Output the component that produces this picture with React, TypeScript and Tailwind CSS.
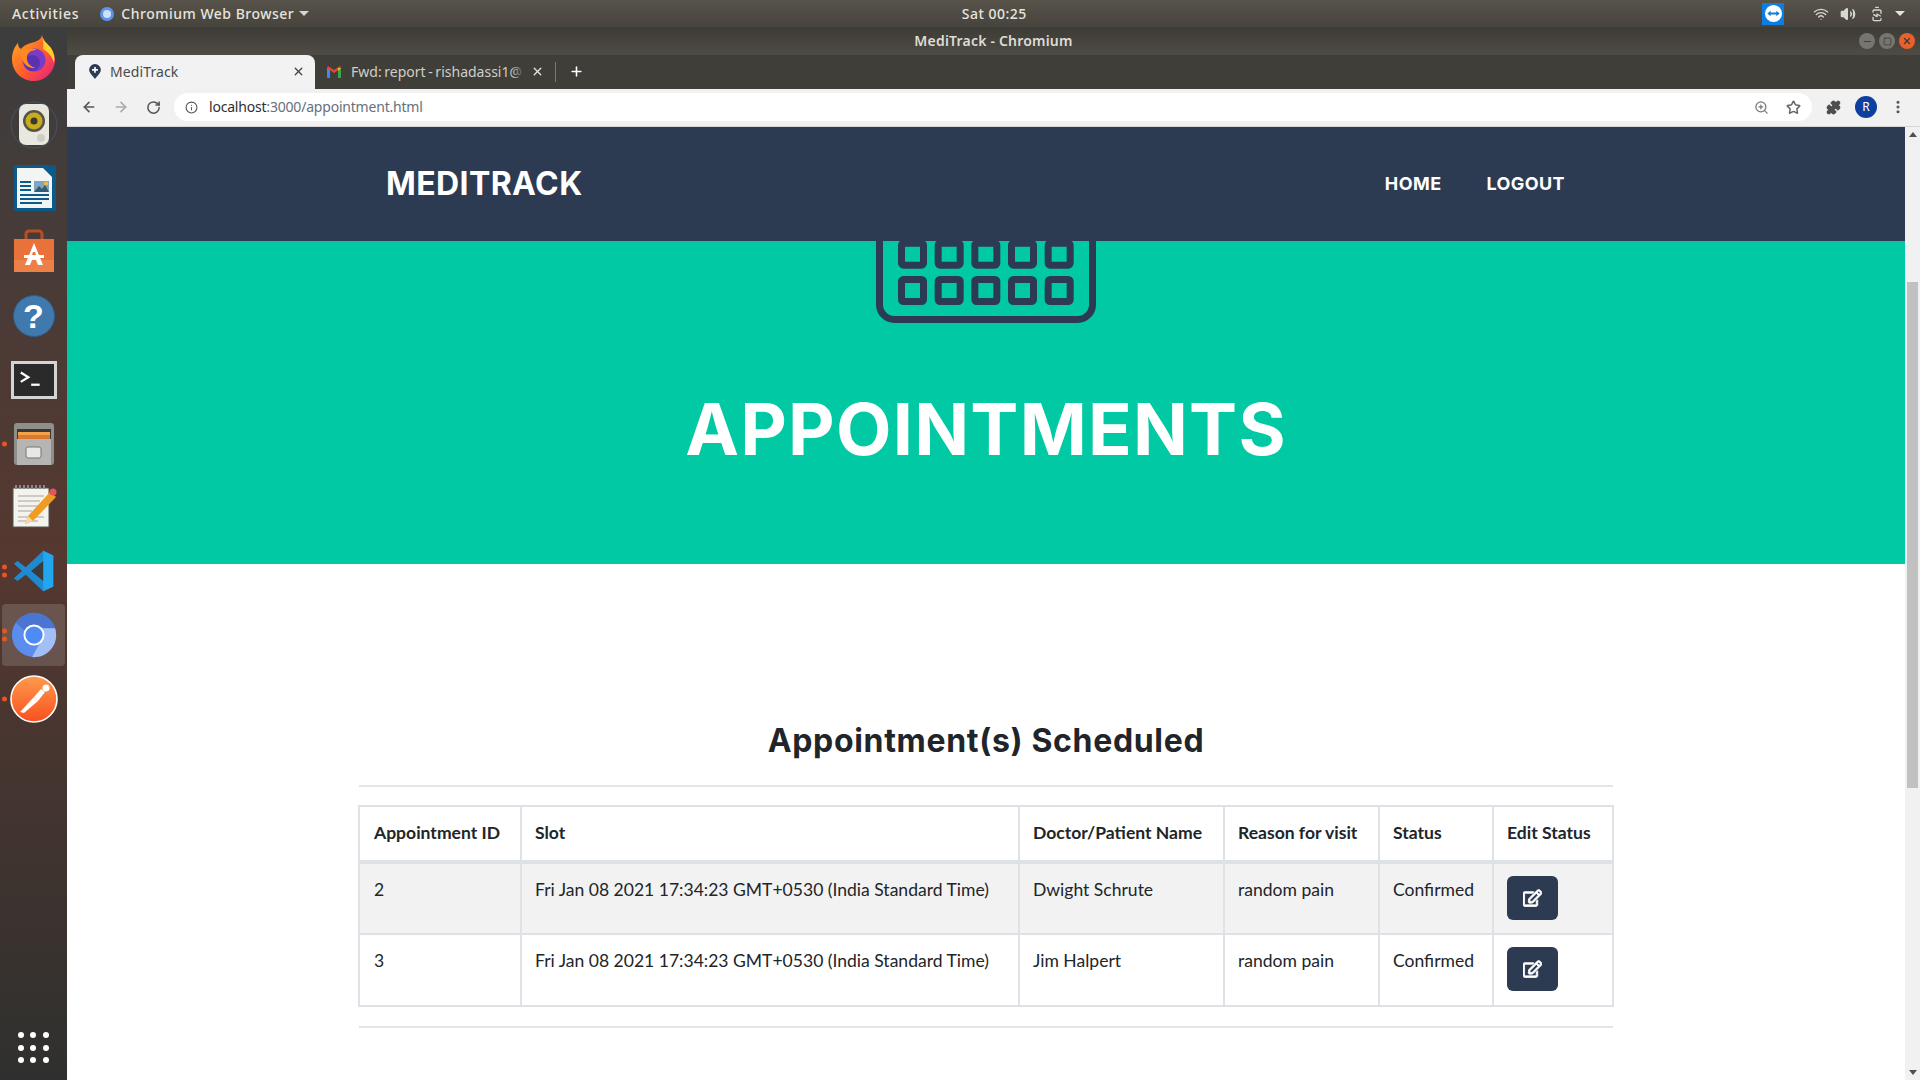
import { ArrowLeft, ArrowRight, RotateCw, Info, ZoomIn, Star, Puzzle, MoreVertical, X, Plus, Minus, Square, Volume2, Wifi, BatteryCharging } from 'lucide-react'
import { FaRegEdit } from 'react-icons/fa'

const rows = [
  { id: '2', name: 'Dwight Schrute', shaded: true },
  { id: '3', name: 'Jim Halpert', shaded: false },
]

function Firefox() {
  return (
    <svg viewBox="0 0 48 48" className="h-[48px] w-[48px] -translate-y-[3px]">
      <defs>
        <linearGradient id="ff" x1="0" y1="0" x2="1" y2="1">
          <stop offset="0" stopColor="#ffb01f" />
          <stop offset="0.55" stopColor="#ff5b2e" />
          <stop offset="1" stopColor="#e3168c" />
        </linearGradient>
      </defs>
      <path d="M32 1c1 6 5 8 9 13 4 6 5 12 3 18-3 9-11 15-20 15C11 47 2 37 2 25 2 18 5 12 8 9c0 3 1 5 3 6 2-3 6-5 10-6 5-1 10-3 11-8z" fill="url(#ff)" />
      <path d="M32 1c1 6 5 8 9 13 3 5 4 10 3 15-2-7-6-11-11-14 1-5 0-10-1-14z" fill="#ffd02a" />
      <circle cx="24" cy="26" r="11.5" fill="#7a3bc8" />
      <circle cx="22" cy="29" r="8" fill="#5a32b0" />
      <path d="M10 18c4-3 11-5 17-2-5 0-9 2-10 6-1 6 3 11 9 12-7 1-14-3-16-16z" fill="#ff8a1f" />
    </svg>
  )
}

function Rhythmbox() {
  return (
    <svg viewBox="0 0 48 48" className="h-[48px] w-[48px]">
      <circle cx="24" cy="24" r="23" fill="none" stroke="#4a6b84" strokeWidth="1" opacity="0.5" />
      <rect x="9" y="3" width="30" height="41" rx="7" fill="#e9e8df" />
      <circle cx="24" cy="20" r="11" fill="#55534b" />
      <circle cx="24" cy="20" r="8.500" fill="#c8ac1c" />
      <circle cx="24" cy="20" r="3.500" fill="#3c3a30" />
      <circle cx="31" cy="37" r="4" fill="#cfcec6" />
    </svg>
  )
}

function Writer() {
  return (
    <svg viewBox="0 0 48 48" className="h-[48px] w-[48px]">
      <path d="M6 1h29l11 11v33a2 2 0 0 1-2 2H6a2 2 0 0 1-2-2V3a2 2 0 0 1 2-2z" fill="#0c5a8a" />
      <path d="M7 4h26l9 9v31H7z" fill="#f3f4f4" />
      <path d="M33 1h11a2 2 0 0 1 2 2v9z" fill="#0c5a8a" />
      <rect x="24" y="17" width="15" height="11" fill="#7ea5c2" />
      <path d="M24 28l5-6 3 3 3-4 4 7z" fill="#355a74" />
      <rect x="34" y="18" width="4" height="3" fill="#e9b949" />
      <path d="M10 18h11M10 22h11M10 26h11M10 31h29M10 35h29M10 39h22" stroke="#0c5a8a" strokeWidth="2" />
    </svg>
  )
}

function Software() {
  return (
    <svg viewBox="0 0 48 48" className="h-[48px] w-[48px]">
      <path d="M16 11V6a3 3 0 0 1 3-3h10a3 3 0 0 1 3 3v5" fill="none" stroke="#b84f22" strokeWidth="3" />
      <path d="M4 11h40v33H4z" fill="#e9713a" />
      <path d="M4 32h40v12H4z" fill="#ed7f49" />
      <path d="M24 15l-9 22h5l2-5h4l2 5h5zM23 24h2l1 3h-4z" fill="#fff" />
      <rect x="14" y="27" width="20" height="3" fill="#fff" />
    </svg>
  )
}

function Help() {
  return (
    <div className="grid h-[42px] w-[42px] place-items-center rounded-full border border-[#2f5d8a] bg-[#3f79ad] font-['Liberation_Sans',sans-serif] text-[34px] font-bold leading-none text-white">?</div>
  )
}

function Terminal() {
  return (
    <div className="h-[38px] w-[46px] border-[3px] border-[#d4d4d2] bg-[#2a2a2a] p-[3px]">
      <svg viewBox="0 0 36 26" className="h-full w-full">
        <path d="M4 5l8 5-8 5" fill="none" stroke="#fff" strokeWidth="2.400" />
        <path d="M15 18h9" stroke="#fff" strokeWidth="2.400" />
      </svg>
    </div>
  )
}

function Files() {
  return (
    <svg viewBox="0 0 48 48" className="h-[48px] w-[48px]">
      <rect x="4" y="3" width="40" height="42" rx="3" fill="#8e8e8c" />
      <rect x="7" y="9" width="34" height="12" fill="#3a3834" />
      <rect x="8" y="12" width="32" height="3" fill="#f1a14a" />
      <rect x="8" y="15" width="32" height="5" fill="#d9782e" />
      <rect x="7" y="19" width="34" height="26" fill="#b5b5b3" />
      <rect x="16" y="27" width="15" height="11" rx="2" fill="#e8e8e6" stroke="#777" />
    </svg>
  )
}

function Gedit() {
  return (
    <svg viewBox="0 0 48 48" className="h-[48px] w-[48px]">
      <rect x="3" y="5" width="36" height="39" fill="#f4f3ee" stroke="#55534b" />
      <path d="M5 4h32" stroke="#888" strokeWidth="4" strokeDasharray="2 2" />
      <path d="M8 13h26M8 18h22M8 23h26M8 28h14M8 34h26M8 38h20" stroke="#a5a39c" strokeWidth="1.200" />
      <path d="M40 9l6 5-23 24-8 3 3-8z" fill="#ee9c26" />
      <path d="M18 33l5 5-8 3z" fill="#f1d8a8" />
      <circle cx="43" cy="9" r="3.500" fill="#e0565b" />
    </svg>
  )
}

function VSCode() {
  return (
    <svg viewBox="0 0 48 48" className="h-[44px] w-[44px]">
      <path d="M34 2l11 5v34l-11 5-19-18-9 7-4-3 9-8-9-8 4-3 9 7z" fill="#1f8ad0" />
      <path d="M34 2l11 5v34l-11 5z" fill="#22a6f0" />
      <path d="M34 13L21 24l13 11z" fill="#3c3b3a" />
    </svg>
  )
}

function Chromium() {
  return (
    <svg viewBox="0 0 48 48" className="h-[46px] w-[46px]">
      <circle cx="24" cy="24" r="23" fill="#5b8def" />
      <path d="M5 11A23 23 0 0 1 46 17H24a8 8 0 0 0-8 4z" fill="#4a76d1" />
      <path d="M46 17a23 23 0 0 1-24 30l10-18a9 9 0 0 0 0-12z" fill="#a3c0f6" />
      <circle cx="24" cy="24" r="11" fill="#fff" />
      <circle cx="24" cy="24" r="9" fill="#4e8bf5" />
    </svg>
  )
}

function Postman() {
  return (
    <svg viewBox="0 0 48 48" className="h-[48px] w-[48px]">
      <defs>
        <linearGradient id="pm" x1="0" y1="0" x2="0" y2="1">
          <stop offset="0" stopColor="#ff9a4d" />
          <stop offset="1" stopColor="#f9501f" />
        </linearGradient>
      </defs>
      <circle cx="24" cy="24" r="23" fill="url(#pm)" stroke="#fff" strokeWidth="1.600" />
      <path d="M10 37l14-15 4 4-14 12z" fill="#fff" />
      <path d="M24 22l7-8 4 3-7 9z" fill="#fff" />
      <circle cx="36" cy="13" r="3.500" fill="#fff" />
    </svg>
  )
}

function Gmail() {
  return (
    <svg viewBox="0 0 14 12" className="h-[12px] w-[14px]">
      <path d="M0 2h3v10H1a1 1 0 0 1-1-1z" fill="#4285f4" />
      <path d="M11 2h3v9a1 1 0 0 1-1 1h-2z" fill="#34a853" />
      <path d="M0 2l7 5 7-5-1-2-6 4-6-4z" fill="#ea4335" />
      <path d="M11 2l3 0-3 3z" fill="#fbbc04" />
    </svg>
  )
}

function MapPin() {
  return (
    <svg viewBox="0 0 14 18" className="h-[15px] w-[12px]">
      <path d="M7 0a7 7 0 0 1 7 7c0 4-4 7-7 11C4 14 0 11 0 7a7 7 0 0 1 7-7z" fill="#2c3a52" />
      <path d="M6 3.500h2V6h2.500v2H8v2.500H6V8H3.500V6H6z" fill="#fff" />
    </svg>
  )
}

function TeamViewer() {
  return (
    <div className="grid h-[22px] w-[22px] place-items-center bg-[#0e7de0]">
      <svg viewBox="0 0 20 20" className="h-[19px] w-[19px]">
        <circle cx="10" cy="10" r="9" fill="#fff" />
        <path d="M3.500 10l3.500-3v2h6V7l3.500 3-3.500 3v-2H7v2z" fill="#0e7de0" />
      </svg>
    </div>
  )
}

function CalendarBottom() {
  const cols = [22, 58.67, 95.33, 132, 168.67]
  return (
    <svg viewBox="0 0 220 82" className="h-[82px] w-[220px] shrink-0">
      <path d="M3.500 -20V63a15 15 0 0 0 15 15.500H201.500a15 15 0 0 0 15-15.500V-20" fill="none" stroke="#2c3a52" strokeWidth="7" />
      {cols.map((x) => (
        <g key={x}>
          <rect x={x + 3.5} y={2.2} width={22} height={22} rx={2} fill="none" stroke="#2c3a52" strokeWidth="7" />
          <rect x={x + 3.5} y={38.5} width={22} height={22} rx={2} fill="none" stroke="#2c3a52" strokeWidth="7" />
        </g>
      ))}
    </svg>
  )
}

const dock = [
  { icon: <Firefox />, dots: 0 },
  { icon: <Rhythmbox />, dots: 0 },
  { icon: <Writer />, dots: 0 },
  { icon: <Software />, dots: 0 },
  { icon: <Help />, dots: 0 },
  { icon: <Terminal />, dots: 0 },
  { icon: <Files />, dots: 1 },
  { icon: <Gedit />, dots: 0 },
  { icon: <VSCode />, dots: 2 },
  { icon: <Chromium />, dots: 2, active: true },
  { icon: <Postman />, dots: 1 },
]

function Dock() {
  return (
    <aside className="flex h-full w-[67px] shrink-0 flex-col bg-gradient-to-b from-[#3c3d3d] via-[#553830] to-[#2f302e] pt-[2px]">
      {dock.map((item, i) => (
        <div key={i} className="relative flex h-[63.800px] items-center justify-center">
          {item.active && <span className="absolute inset-x-[2px] inset-y-[1px] rounded bg-white/15" />}
          <span className="relative flex items-center justify-center">{item.icon}</span>
          {item.dots > 0 && (
            <span className="absolute left-[2px] top-1/2 flex -translate-y-1/2 flex-col gap-[3px]">
              {Array.from({ length: item.dots }).map((_, d) => (
                <span key={d} className="h-[5px] w-[5px] rounded-full bg-[#e95420]" />
              ))}
            </span>
          )}
        </div>
      ))}
      <div className="mt-auto mb-[16px] grid h-[32px] w-[32px] grid-cols-3 gap-[6px] self-center">
        {Array.from({ length: 9 }).map((_, i) => (
          <span key={i} className="h-[6px] w-[6px] rounded-full bg-white" />
        ))}
      </div>
    </aside>
  )
}

function TopBar() {
  return (
    <div className="flex h-[27px] shrink-0 items-center bg-gradient-to-b from-[#57534b] to-[#47443d] pl-[12px] pr-[15px] font-['Noto_Sans',sans-serif] text-[14px] font-medium tracking-[0.5px] text-[#e6e4df]">
      <span className="tracking-[0.7px]">Activities</span>
      <span className="ml-[21px] h-[14px] w-[14px] rounded-full border-[3px] border-[#5f93ea] bg-[#cfe0fb]" />
      <span className="ml-[7px]">Chromium Web Browser</span>
      <span className="ml-[5px] border-x-[5px] border-t-[5px] border-x-transparent border-t-[#d8d6d0]" />
      <span className="ml-[650px] w-[70px] text-center">Sat 00:25</span>
      <span className="ml-auto"><TeamViewer /></span>
      <Wifi className="ml-[29px] h-[16px] w-[16px] text-[#d8d6d0]" />
      <Volume2 className="ml-[11px] h-[16px] w-[16px] fill-[#d8d6d0] text-[#d8d6d0]" />
      <BatteryCharging className="ml-[13px] h-[16px] w-[16px] -rotate-90 text-[#d8d6d0]" />
      <span className="ml-[10px] border-x-[5px] border-t-[5px] border-x-transparent border-t-[#e6e4df]" />
    </div>
  )
}

function TitleBar() {
  return (
    <div className="relative flex h-[28px] shrink-0 items-center justify-center bg-gradient-to-b from-[#3d3b35] to-[#4f4c45] pb-[2px] font-['Noto_Sans',sans-serif] text-[14px] font-semibold tracking-[0.2px] text-[#dedcd7]">
      <span>MediTrack - Chromium</span>
      <div className="absolute right-[5px] top-[6px] flex gap-[4px]">
        <span className="grid h-[16px] w-[16px] place-items-center rounded-full bg-[#77756f]"><Minus className="h-[11px] w-[11px] text-[#3c3b37]" /></span>
        <span className="grid h-[16px] w-[16px] place-items-center rounded-full bg-[#77756f]"><Square className="h-[9px] w-[9px] text-[#3c3b37]" /></span>
        <span className="grid h-[16px] w-[16px] place-items-center rounded-full bg-[#e9602b]"><X className="h-[10px] w-[10px] text-[#3c3b37]" strokeWidth={3} /></span>
      </div>
    </div>
  )
}

function TabStrip() {
  return (
    <div className="flex h-[34px] shrink-0 items-end bg-[#3f3e38] pl-[8px] font-['Noto_Sans',sans-serif] text-[14px]">
      <div className="flex h-[34px] w-[240px] items-center rounded-t-[8px] bg-[#f2f2f2] pb-[1px] pl-[14px] pr-[10px] text-[#4a4a4a]">
        <MapPin />
        <span className="ml-[9px] pb-[1px] tracking-[0.1px]">MediTrack</span>
        <X className="ml-auto h-[13px] w-[13px] text-[#444]" strokeWidth={2.5} />
      </div>
      <div className="flex h-[34px] w-[280px] items-center pb-[1px] pl-[12px] text-[#cfcfca]">
        <Gmail />
        <span className="relative ml-[10px] w-[174px] overflow-hidden whitespace-nowrap pb-[1px] [word-spacing:-1px]">
          Fwd: report - rishadassi1@
          <span className="absolute inset-y-0 right-0 w-[14px] bg-gradient-to-r from-transparent to-[#3f3e38]" />
        </span>
        <X className="ml-[6px] h-[13px] w-[13px] text-[#e4e4e0]" strokeWidth={2.5} />
        <span className="ml-[11px] h-[20px] w-px bg-[#7a7972]" />
        <Plus className="ml-[13px] h-[15px] w-[15px] text-white" strokeWidth={2.5} />
      </div>
    </div>
  )
}

function Toolbar() {
  return (
    <div className="flex h-[38px] shrink-0 items-center border-b border-[#d5d5d5] bg-[#f1f1f1] pb-[1px] pl-[14px] pr-[14px] text-[#555]">
      <ArrowLeft className="h-[16px] w-[16px]" strokeWidth={2.4} />
      <ArrowRight className="ml-[16px] h-[16px] w-[16px] text-[#aaa]" strokeWidth={2.4} />
      <RotateCw className="ml-[17px] h-[15px] w-[15px]" strokeWidth={2.4} />
      <div className="ml-[13px] flex h-[28px] w-[1638px] shrink-0 items-center rounded-full bg-white pl-[11px] pr-[11px] font-['Noto_Sans',sans-serif] text-[14px] tracking-[-0.2px] text-[#66707c]">
        <Info className="h-[13px] w-[13px] text-[#555]" />
        <span className="ml-[11px] pb-[1px]"><span className="text-[#2f2f2f]">localhost</span>:3000/appointment.html</span>
        <ZoomIn className="ml-auto h-[15px] w-[15px] text-[#777]" />
        <Star className="ml-[17px] h-[15px] w-[15px] text-[#666]" strokeWidth={2.4} />
      </div>
      <Puzzle className="ml-[14px] h-[15px] w-[15px] fill-[#4f4f4f] text-[#4f4f4f]" />
      <span className="ml-[14px] grid h-[22px] w-[22px] place-items-center rounded-full bg-[#0d3f9e] font-['Noto_Sans',sans-serif] text-[12px] text-white">R</span>
      <MoreVertical className="ml-[13px] h-[16px] w-[16px] text-[#555]" strokeWidth={2.6} />
    </div>
  )
}

function Scrollbar() {
  return (
    <div className="flex h-full w-[15px] shrink-0 flex-col items-center bg-[#f1f1f1]">
      <span className="mt-[5px] border-x-[4px] border-b-[5px] border-x-transparent border-b-[#505050]" />
      <span className="mt-[145px] h-[506px] w-[11px] bg-[#c1c1c1]" />
      <span className="mb-[5px] mt-auto border-x-[4px] border-t-[5px] border-x-transparent border-t-[#505050]" />
    </div>
  )
}

function AppointmentsTable() {
  const th = 'border-2 border-[#dee2e6] border-b-[4px] px-[13px] pb-[2px] text-left font-bold first:pl-[14px]'
  const td = 'border-2 border-[#dee2e6] px-[13px] pt-[12px] align-top first:pl-[14px]'
  return (
    <table className="w-[1254px] table-fixed border-collapse font-['Lato',sans-serif] text-[17.550px] leading-[27px] text-[#212529]">
      <colgroup>
        <col className="w-[162px]" />
        <col className="w-[498px]" />
        <col className="w-[205px]" />
        <col className="w-[155px]" />
        <col className="w-[114px]" />
        <col className="w-[120px]" />
      </colgroup>
      <thead>
        <tr className="h-[56px]">
          {['Appointment ID', 'Slot', 'Doctor/Patient Name', 'Reason for visit', 'Status', 'Edit Status'].map((h) => (
            <th key={h} className={th}>{h}</th>
          ))}
        </tr>
      </thead>
      <tbody>
        {rows.map((r) => (
          <tr key={r.id} className={r.shaded ? 'h-[72px] bg-[#f2f2f2]' : 'h-[72px]'}>
            <td className={td}>{r.id}</td>
            <td className={td}>Fri Jan 08 2021 17:34:23 GMT+0530 (India Standard Time)</td>
            <td className={td}>{r.name}</td>
            <td className={td}>random pain</td>
            <td className={td}>Confirmed</td>
            <td className={td}>
              <button className="grid h-[44px] w-[51px] place-items-center rounded-[6px] bg-[#2c3a52] text-white">
                <FaRegEdit className="h-[18px] w-[19px] stroke-current stroke-[25]" />
              </button>
            </td>
          </tr>
        ))}
      </tbody>
    </table>
  )
}

function Page() {
  return (
    <main className="min-w-0 flex-1 overflow-hidden bg-white">
      <nav className="flex h-[114px] items-center bg-[#2c3a52] pl-[319px] pr-[340px] font-['Inter',sans-serif] font-bold text-white">
        <span className="text-[32px] tracking-[0.4px]">MEDITRACK</span>
        <span className="ml-auto pb-[1px] text-[18px] tracking-[0.4px]">HOME</span>
        <span className="ml-[45px] pb-[1px] text-[18px] tracking-[0.4px]">LOGOUT</span>
      </nav>
      <section className="flex h-[323px] flex-col items-center bg-[#01c9a3]">
        <CalendarBottom />
        <h1 className="mt-[63px] font-['Inter',sans-serif] text-[72px] font-bold leading-[86px] tracking-[1.25px] text-white">APPOINTMENTS</h1>
      </section>
      <section className="flex flex-col items-center">
        <h2 className="mt-[158px] font-['Inter',sans-serif] text-[32px] font-bold leading-[38px] tracking-[0.67px] text-[#212529]">Appointment(s) Scheduled</h2>
        <hr className="mt-[25px] w-[1254px] border-t-2 border-[#e5e5e5]" />
        <div className="mt-[18px]"><AppointmentsTable /></div>
        <hr className="mt-[19px] w-[1254px] border-t-2 border-[#e5e5e5]" />
      </section>
    </main>
  )
}

export default function App() {
  return (
    <div className="flex h-screen w-screen flex-col overflow-hidden bg-white">
      <TopBar />
      <div className="flex min-h-0 flex-1">
        <Dock />
        <div className="flex min-w-0 flex-1 flex-col">
          <TitleBar />
          <TabStrip />
          <Toolbar />
          <div className="flex min-h-0 flex-1">
            <Page />
            <Scrollbar />
          </div>
        </div>
      </div>
    </div>
  )
}
